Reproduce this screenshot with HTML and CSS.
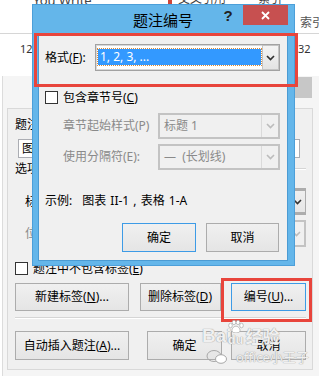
FILE: index.html
```html
<!DOCTYPE html>
<html lang="zh-CN">
<head>
  <meta charset="UTF-8" />
  <meta name="viewport" content="width=device-width, initial-scale=1.0" />
  <title>题注编号</title>
  <link rel="stylesheet" href="styles.css">
</head>
<body>
  <div class="screen">
    <!-- Word document behind the dialogs -->
    <div class="doc">
      <div class="ribbon">
        <span class="rb-you">You Write</span>
        <span class="rb-cross"><i class="rb-icon"></i>交叉引用</span>
        <span class="rb-box">索引</span>
        <span class="rb-index">索引</span>
      </div>
      <div class="doc-row">
        <span class="cell-a">12</span>
        <span class="cell-b">32</span>
      </div>
    </div>

    <!-- Caption dialog (inactive, behind) -->
    <div class="win win-back">
      <div class="win-title">
        <span class="back-name">题注</span>
        <span class="back-close"></span>
      </div>
      <div class="client back-client">
        <div class="b-label">题注(<u>C</u>):</div>
        <div class="textbox">图表 1</div>
        <div class="group"><span>选项</span><i class="etch"></i></div>
        <div class="b-field">
          <span>标签(<u>L</u>):</span>
          <div class="combo combo-on">
            <span class="combo-text"></span>
            <span class="drop"><svg width="9" height="6" viewBox="0 0 9 6"><path d="M1 1l3.5 3.5L8 1" fill="none" stroke="#333" stroke-width="1.6"/></svg></span>
          </div>
        </div>
        <div class="b-field is-off">
          <span>位置(<u>P</u>):</span>
          <div class="combo combo-off">
            <span class="combo-text"></span>
            <span class="drop"><svg width="9" height="6" viewBox="0 0 9 6"><path d="M1 1l3.5 3.5L8 1" fill="none" stroke="#bcbcbc" stroke-width="1.6"/></svg></span>
          </div>
        </div>
        <div class="check-row b-check"><i class="box"></i><span>题注中不包含标签(<u>E</u>)</span></div>
        <div class="btn-row row-1">
          <div class="btn w-114"><span>新建标签(<u>N</u>)...</span></div>
          <div class="btn w-81"><span>删除标签(<u>D</u>)</span></div>
          <div class="btn btn-focus w-75"><span>编号(<u>U</u>)...</span></div>
        </div>
        <i class="etch sep"></i>
        <div class="btn-row row-2">
          <div class="btn w-114"><span>自动插入题注(<u>A</u>)...</span></div>
          <div class="btn w-75 push">确定</div>
          <div class="btn w-75">取消</div>
        </div>
      </div>
    </div>

    <!-- Numbering dialog (active, front) -->
    <div class="win win-front">
      <div class="win-title">
        <span class="front-name">题注编号</span>
        <div class="front-ctrls">
          <span class="help">?</span>
          <span class="close"><svg width="9" height="9" viewBox="0 0 9 9"><path d="M1 1l7 7M8 1L1 8" stroke="#fff" stroke-width="1.8"/></svg></span>
        </div>
      </div>
      <div class="client front-client">
        <div class="f-format">
          <span class="f-label">格式(<u>F</u>):</span>
          <div class="combo combo-focus">
            <span class="sel">1, 2, 3, ...</span>
            <span class="drop"><svg width="9" height="6" viewBox="0 0 9 6"><path d="M1 1l3.5 3.5L8 1" fill="none" stroke="#333" stroke-width="1.7"/></svg></span>
          </div>
        </div>
        <div class="check-row f-check"><i class="box"></i><span>包含章节号(<u>C</u>)</span></div>
        <div class="f-sub is-off">
          <span>章节起始样式(P)</span>
          <div class="combo combo-off">
            <span class="combo-text">标题 1</span>
            <span class="drop"><svg width="9" height="6" viewBox="0 0 9 6"><path d="M1 1l3.5 3.5L8 1" fill="none" stroke="#bcbcbc" stroke-width="1.6"/></svg></span>
          </div>
        </div>
        <div class="f-sub is-off">
          <span>使用分隔符(E):</span>
          <div class="combo combo-off">
            <span class="combo-text">—&nbsp; (长划线)</span>
            <span class="drop"><svg width="9" height="6" viewBox="0 0 9 6"><path d="M1 1l3.5 3.5L8 1" fill="none" stroke="#bcbcbc" stroke-width="1.6"/></svg></span>
          </div>
        </div>
        <div class="example">
          <span>示例:</span>
          <span>图表 II-1 , 表格 1-A</span>
        </div>
        <div class="btn-row f-btns">
          <div class="btn btn-default">确定</div>
          <div class="btn">取消</div>
        </div>
      </div>
    </div>

    <!-- red annotation boxes -->
    <div class="mark mark-top"></div>
    <div class="mark mark-btn"></div>

    <!-- watermark -->
    <div class="watermark">
      <div class="wm-logo">
        <span>Bai</span>
        <span class="wm-paw">
          <svg width="16" height="13" viewBox="0 0 16 13"><g fill="#fff" stroke="#a8a8a8" stroke-width=".7"><ellipse cx="2.5" cy="5.5" rx="1.8" ry="2.3"/><ellipse cx="6" cy="2.4" rx="1.8" ry="2.2"/><ellipse cx="10" cy="2.4" rx="1.8" ry="2.2"/><ellipse cx="13.5" cy="5.5" rx="1.8" ry="2.3"/><path d="M8 6.2c-2.8 0-4.8 3.6-3.8 5.4s6.6 1.8 7.6 0S10.8 6.2 8 6.2z"/></g></svg>
          <span class="wm-du">du</span>
        </span>
        <span class="wm-jy">经验</span>
      </div>
      <div class="wm-user">
        <svg width="22" height="16" viewBox="0 0 22 16"><g fill="none" stroke="#a8a8a8" stroke-width="1"><ellipse cx="8" cy="7" rx="7" ry="5.5"/><ellipse cx="15" cy="10" rx="5.5" ry="4.3" fill="#fff"/></g></svg>
        <span>office小王子</span>
      </div>
    </div>
  </div>
</body>
</html>
```

FILE: styles.css
```css
* {
  margin: 0;
  padding: 0;
  box-sizing: border-box;
}

body {
  background: #ffffff;
  font-family: "Noto Sans", "Noto Sans CJK SC", sans-serif;
  font-size: 12px;
  line-height: 16px;
  color: #000000;
}

.screen {
  position: relative;
  width: 319px;
  height: 376px;
  overflow: hidden;
}

u {
  text-decoration: underline;
  text-underline-offset: 1px;
}

/* Word document */
.doc {
  height: 76px;
  background: #ffffff;
}

.ribbon {
  height: 34px;
  border-bottom: 1px solid #d6d6d6;
  display: grid;
  grid-template-columns: 33px 135px 90px 42px 1fr;
  align-items: start;
  color: #444444;
  overflow: hidden;
}

.rb-you {
  grid-column: 2;
  margin-top: -8px;
  font-size: 13px;
}

.rb-cross {
  grid-column: 3;
  margin-top: -9px;
  display: flex;
  align-items: center;
  gap: 6px;
}

.rb-icon {
  width: 4px;
  height: 12px;
  background: #d04437;
}

.rb-box {
  grid-column: 4;
  margin-top: -9px;
}

.rb-index {
  grid-column: 5;
  margin-top: 15px;
  color: #555555;
  white-space: nowrap;
}

.doc-row {
  display: grid;
  grid-template-columns: 278px 1fr;
  padding: 8px 0 0 20px;
  font-size: 11px;
  line-height: 14px;
  color: #333333;
}

/* windows */
.win {
  display: flex;
  flex-direction: column;
}

.win-title {
  display: grid;
  flex: none;
}

.win-title > * {
  grid-area: 1 / 1;
}

.client {
  flex: 1;
  display: flex;
  flex-direction: column;
  background: #f0f0f0;
}

/* background caption dialog */
.win-back {
  margin-left: 2px;
  width: 317px;
  height: 300px;
  background: #f5f5f5;
  border-left: 1px solid #dcdcdc;
  padding: 0 6px 6px 4px;
}

.win-back .win-title {
  height: 32px;
}

.back-name {
  justify-self: center;
  margin-top: 7px;
  font-size: 15px;
  color: #8a8a8a;
}

.back-close {
  justify-self: end;
  width: 45px;
  height: 21px;
  margin: 1px 1px 0 0;
  background: #c7c7c7;
}

.back-client {
  border: 1px solid #d9d9d9;
  padding: 0 6px 0 7px;
}

.b-label {
  margin-top: 8px;
}

.textbox {
  margin: 6px 0 0 3px;
  width: 282px;
  height: 19px;
  border: 1px solid #abadb3;
  background: #ffffff;
  padding-left: 3px;
  line-height: 17px;
}

.group {
  margin-top: 3px;
  display: flex;
  align-items: center;
  gap: 4px;
}

.etch {
  flex: 1;
  height: 2px;
  border-top: 1px solid #d5d5d5;
  border-bottom: 1px solid #ffffff;
}

.b-field {
  display: flex;
  align-items: center;
  height: 27px;
  padding-left: 10px;
  margin-top: 11px;
}

.b-field + .b-field {
  margin-top: 5px;
}

.b-field .combo {
  margin-left: auto;
  width: 236px;
}

.is-off {
  color: #8a8a8a;
}

.b-check {
  margin-top: 15px;
}

.row-1 {
  margin-top: 8px;
  height: 28px;
  justify-content: space-between;
}

.sep {
  flex: none;
  margin-top: 6px;
}

.row-2 {
  margin-top: 12px;
  height: 29px;
}

.push {
  margin-left: auto;
  margin-right: 9px;
}

/* front numbering dialog */
.win-front {
  position: absolute;
  left: 32px;
  top: 4px;
  width: 263px;
  height: 262px;
  background: #64b6ea;
  box-shadow: inset 0 0 0 1px #4c9fd9;
  padding: 0 8px 6px 7px;
}

.win-front .win-title {
  height: 30px;
}

.front-name {
  justify-self: center;
  margin-top: 6px;
  font-size: 15px;
  line-height: 20px;
  color: #000000;
}

.front-ctrls {
  justify-self: end;
  display: flex;
  align-items: flex-start;
  margin-right: -1px;
}

.help {
  width: 20px;
  margin: 4px 5px 0 0;
  text-align: center;
  font-family: "Liberation Sans", sans-serif;
  font-weight: bold;
  font-size: 15px;
  line-height: 16px;
  color: #222222;
}

.close {
  width: 45px;
  height: 20px;
  margin-top: 1px;
  background: #c75050;
  display: flex;
  align-items: center;
  justify-content: center;
}

.front-client {
  box-shadow: 0 0 0 1px #4b9bd3;
  padding: 0 7px 0 6px;
}

.f-format {
  margin-top: 10px;
  height: 27px;
  display: flex;
  align-items: center;
}

.f-label {
  width: 50px;
}

.f-check {
  margin-top: 20px;
}

.f-sub {
  height: 26px;
  margin-top: 9px;
  padding-left: 18px;
  display: flex;
  align-items: center;
  justify-content: space-between;
}

.f-sub + .f-sub {
  margin-top: 5px;
}

.example {
  margin-top: 23px;
  display: flex;
  gap: 10px;
  word-spacing: 1px;
}

.f-btns {
  margin-top: 14px;
  height: 29px;
  justify-content: flex-end;
  gap: 10px;
  padding-right: 1px;
}

.f-btns .btn:first-child {
  width: 74px;
}

.f-btns .btn:last-child {
  width: 73px;
}

/* controls */
.combo {
  display: flex;
  height: 100%;
  border: 1px solid #acacac;
}

.combo-text {
  flex: 1;
  padding-left: 4px;
  display: flex;
  align-items: center;
  white-space: nowrap;
}

.drop {
  width: 17px;
  display: flex;
  align-items: center;
  justify-content: center;
}

.combo-focus {
  width: 185px;
  background: #ffffff;
  border-color: #a2a2a2;
  box-shadow: inset 0 0 0 1px #d8d8d8;
}

.sel {
  flex: 1;
  margin: 4px 1px 5px 2px;
  padding-left: 2px;
  background: #3399ff;
  outline: 1px dotted #d98a3a;
  color: #ffffff;
  display: flex;
  align-items: center;
}

.combo-focus .drop {
  border: 1px solid #c4c4c4;
  background: linear-gradient(#f4f4f4, #e4e4e4);
}

.combo-off {
  width: 122px;
  border: 2px solid #c3c3c3;
  background: #f0f0f0;
}

.combo-off .drop {
  border-left: 1px solid #dadada;
}

.combo-on {
  background: linear-gradient(#f0f0f0, #e5e5e5);
}

.combo-on .drop {
  border: 2px solid #adadad;
  border-right: 0;
}

.check-row {
  display: flex;
  align-items: center;
  gap: 5px;
  height: 13px;
  line-height: 13px;
}

.box {
  width: 13px;
  height: 13px;
  border: 1px solid #333333;
  background: #ffffff;
}

.btn-row {
  display: flex;
}

.btn {
  height: 100%;
  display: flex;
  align-items: center;
  justify-content: center;
  border: 1px solid #acacac;
  background: linear-gradient(#f0f0f0, #e5e5e5);
  white-space: nowrap;
}

.btn-default,
.btn-focus {
  border-color: #3d9be6;
}

.w-114 {
  width: 114px;
}

.w-81 {
  width: 81px;
}

.w-75 {
  width: 75px;
}

/* red annotation boxes */
.mark {
  position: absolute;
  border: 3px solid #e8453c;
}

.mark-top {
  left: 34px;
  top: 33px;
  width: 264px;
  height: 54px;
}

.mark-btn {
  left: 221px;
  top: 278px;
  width: 91px;
  height: 44px;
}

/* watermark */
.watermark {
  position: absolute;
  left: 202px;
  top: 320px;
  color: rgba(255, 255, 255, 0.85);
  text-shadow: 0 0 1px #a0a0a0, 0 0 1px #a0a0a0;
  pointer-events: none;
}

.wm-logo {
  display: flex;
  align-items: flex-end;
  font-family: "Liberation Sans", sans-serif;
  font-weight: bold;
  font-size: 19px;
  line-height: 20px;
}

.wm-paw {
  display: flex;
  flex-direction: column;
  align-items: center;
  margin-left: -4px;
}

.wm-du {
  font-size: 13px;
  line-height: 13px;
}

.wm-jy {
  margin-left: 2px;
  font-family: "Noto Sans CJK SC", sans-serif;
  font-size: 17px;
  line-height: 20px;
}

.wm-user {
  display: flex;
  align-items: center;
  gap: 8px;
  margin: 3px 0 0 4px;
  font-size: 13px;
  line-height: 15px;
}
```
